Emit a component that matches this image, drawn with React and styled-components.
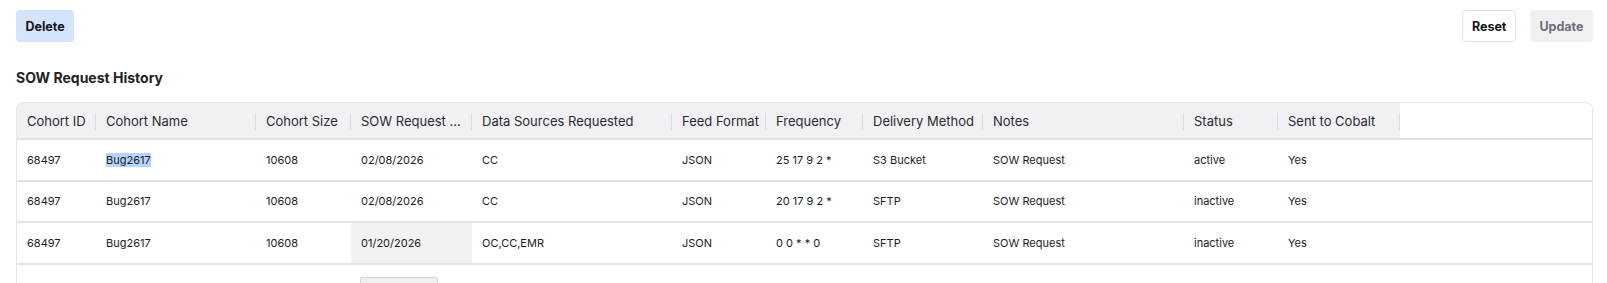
import React from "react";
import styled, { createGlobalStyle } from "styled-components";

const GlobalStyle = createGlobalStyle`
  html, body {
    margin: 0;
    background: #ffffff;
    font-family: Inter, "Noto Sans", sans-serif;
    color: #1f1f1f;
    overflow: hidden;
  }
`;

const columns = [
  { key: "id", label: "Cohort ID", width: 79 },
  { key: "name", label: "Cohort Name", width: 160 },
  { key: "size", label: "Cohort Size", width: 95 },
  { key: "date", label: "SOW Request ...", width: 121 },
  { key: "sources", label: "Data Sources Requested", width: 200 },
  { key: "format", label: "Feed Format", width: 94 },
  { key: "freq", label: "Frequency", width: 97 },
  { key: "delivery", label: "Delivery Method", width: 120 },
  { key: "notes", label: "Notes", width: 201 },
  { key: "status", label: "Status", width: 94 },
  { key: "sent", label: "Sent to Cobalt", width: 122 },
];

const rows = [
  { id: "68497", name: "Bug2617", size: "10608", date: "02/08/2026", sources: "CC", format: "JSON", freq: "25 17 9 2 *", delivery: "S3 Bucket", notes: "SOW Request", status: "active", sent: "Yes" },
  { id: "68497", name: "Bug2617", size: "10608", date: "02/08/2026", sources: "CC", format: "JSON", freq: "20 17 9 2 *", delivery: "SFTP", notes: "SOW Request", status: "inactive", sent: "Yes" },
  { id: "68497", name: "Bug2617", size: "10608", date: "01/20/2026", sources: "OC,CC,EMR", format: "JSON", freq: "0 0 * * 0", delivery: "SFTP", notes: "SOW Request", status: "inactive", sent: "Yes" },
];

const template =
  columns.map((c) => `${c.width}px`).join(" ") + " minmax(0, 1fr)";

const Page = styled.div`
  height: 283px;
  overflow: hidden;
  box-sizing: border-box;
  padding: 10px 14px 0 16px;
`;

const Toolbar = styled.div`
  display: flex;
  align-items: center;
  justify-content: space-between;
`;

const ButtonGroup = styled.div`
  display: flex;
  gap: 14px;
`;

const Button = styled.button`
  height: 32px;
  padding: 0 8.5px;
  border-radius: 4px;
  font-family: Inter, "Noto Sans", sans-serif;
  font-size: 12.5px;
  font-weight: 700;
  cursor: pointer;
  border: 1px solid
    ${(p) => (p.$variant === "outline" ? "#e3e3e6" : "transparent")};
  background: ${(p) =>
    p.$variant === "primary"
      ? "#d3e4fc"
      : p.$variant === "disabled"
      ? "#f0f0f2"
      : "#ffffff"};
  color: ${(p) => (p.$variant === "disabled" ? "#6e6e78" : "#16181d")};
`;

const Title = styled.h2`
  margin: 27px 0 16px;
  font-size: 14px;
  font-weight: 700;
  color: #222;
  line-height: 17px;
`;

const Table = styled.div`
  border: 1px solid #e6e6e8;
  border-bottom: none;
  border-radius: 8px 8px 0 0;
  overflow: hidden;
`;

const HeaderRow = styled.div`
  display: grid;
  grid-template-columns: ${template};
  height: 35px;
  border-bottom: 2px solid #e2e2e5;
`;

const HeaderCell = styled.div`
  position: relative;
  display: flex;
  align-items: center;
  padding: 0 10px;
  background: ${(p) => (p.$filler ? "#ffffff" : "#f1f1f3")};
  font-size: 13px;
  color: #2b2b2f;
  white-space: nowrap;
  overflow: hidden;

  &::after {
    content: "";
    display: ${(p) => (p.$filler ? "none" : "block")};
    position: absolute;
    right: 0;
    top: 10px;
    bottom: 8px;
    width: 1px;
    background: #dcdce0;
  }
`;

const BodyRow = styled.div`
  display: grid;
  grid-template-columns: ${template};
  height: 39.5px;
  border-bottom: 2px solid #e4e4e4;
`;

const Cell = styled.div`
  display: flex;
  align-items: center;
  padding: 0 10px;
  font-size: 11px;
  color: #1c1c1c;
  white-space: nowrap;
  overflow: hidden;
  background: ${(p) => (p.$hover ? "#f2f2f2" : "transparent")};
`;

const Selected = styled.span`
  background: #b4d5fe;
`;

const Footer = styled.div`
  height: 30px;
  border-left: 1px solid #e6e6e8;
  border-right: 1px solid #e6e6e8;
  padding: 12px 0 0 343px;
  box-sizing: border-box;
`;

const PageButton = styled.div`
  width: 76px;
  height: 20px;
  border: 1px solid #d6d6d6;
  border-radius: 2px;
  background: #f0f0f0;
`;

export default function App() {
  return (
    <>
      <GlobalStyle />
      <Page>
        <Toolbar>
          <Button $variant="primary">Delete</Button>
          <ButtonGroup>
            <Button $variant="outline">Reset</Button>
            <Button $variant="disabled">Update</Button>
          </ButtonGroup>
        </Toolbar>
        <Title>SOW Request History</Title>
        <Table>
          <HeaderRow>
            {columns.map((c) => (
              <HeaderCell key={c.key}>{c.label}</HeaderCell>
            ))}
            <HeaderCell $filler />
          </HeaderRow>
          {rows.map((r, i) => (
            <BodyRow key={i}>
              {columns.map((c) => (
                <Cell key={c.key} $hover={i === 2 && c.key === "date"}>
                  {i === 0 && c.key === "name" ? (
                    <Selected>{r[c.key]}</Selected>
                  ) : (
                    r[c.key]
                  )}
                </Cell>
              ))}
              <Cell />
            </BodyRow>
          ))}
        </Table>
        <Footer>
          <PageButton />
        </Footer>
      </Page>
    </>
  );
}
